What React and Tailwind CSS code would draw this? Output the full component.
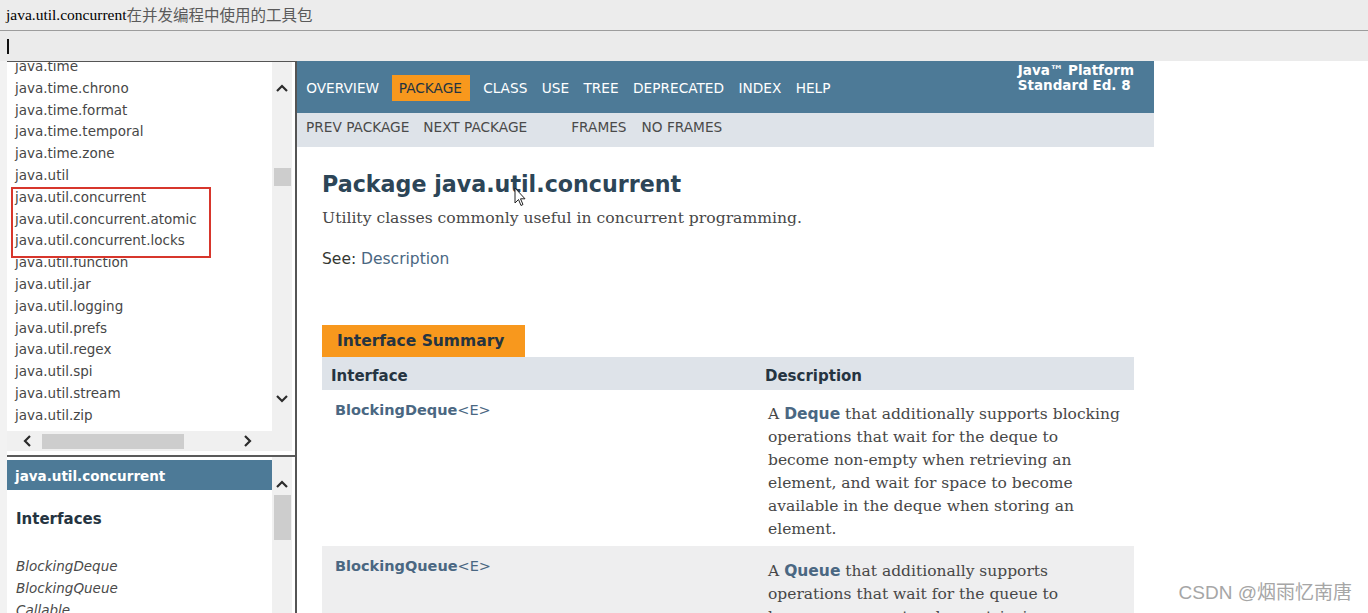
import React from "react";

const packages = [
  "java.time",
  "java.time.chrono",
  "java.time.format",
  "java.time.temporal",
  "java.time.zone",
  "java.util",
  "java.util.concurrent",
  "java.util.concurrent.atomic",
  "java.util.concurrent.locks",
  "java.util.function",
  "java.util.jar",
  "java.util.logging",
  "java.util.prefs",
  "java.util.regex",
  "java.util.spi",
  "java.util.stream",
  "java.util.zip",
  "java.util.zip.util",
];

const navItems = ["OVERVIEW", "PACKAGE", "CLASS", "USE", "TREE", "DEPRECATED", "INDEX", "HELP"];

function Chevron({ dir = "up" }) {
  const pts = {
    up: "1,7 6,2 11,7",
    down: "1,2 6,7 11,2",
    left: "7,1 2,6 7,11",
    right: "2,1 7,6 2,11",
  }[dir];
  const horiz = dir === "left" || dir === "right";
  return (
    <svg width={horiz ? 9 : 12} height={horiz ? 12 : 9} viewBox={horiz ? "0 0 9 12" : "0 0 12 9"}>
      <polyline points={pts} fill="none" stroke="#2b2b2b" strokeWidth="2.2" />
    </svg>
  );
}

export default function App() {
  return (
    <div className="w-[1368px] h-[613px] overflow-hidden bg-white relative flex flex-col font-['DejaVu_Sans',sans-serif]">
      {/* title bar of the editor */}
      <div className="h-[31px] bg-[#ececec] border-b border-[#9c9c9c] flex items-center pl-[6px] shrink-0">
        <span className="font-['Liberation_Serif',serif] text-[15.5px] text-black">java.util.concurrent</span>
        <span className="font-['Noto_Sans_CJK_SC',sans-serif] text-[15.5px] text-[#5a5a5a]">在并发编程中使用的工具包</span>
      </div>
      <div className="h-[30px] bg-[#ebebeb] flex items-center pl-[7px] shrink-0">
        <div className="w-[2px] h-[15px] bg-[#111]" />
      </div>

      <div className="flex flex-1 min-h-0">
        <div className="w-[7px] bg-[#f2f2f2]" />

        {/* left frames */}
        <div className="w-[288px] flex flex-col border-t border-[#555]">
          <div className="h-[369px] flex">
            <div className="w-[265px] bg-white relative overflow-hidden">
              <div className="mt-[-6px] pl-[8px] text-[13.5px] text-[#474747]">
                {packages.map((p) => (
                  <div key={p} className="h-[21.8px] leading-[21.8px] whitespace-nowrap">
                    {p}
                  </div>
                ))}
              </div>
              <div className="absolute left-[4px] top-[125px] w-[200px] h-[71px] border-2 border-[#d7362c]" />
            </div>
            <div className="w-[20px] bg-[#f0f0f0] flex flex-col items-center">
              <div className="mt-[22px]">
                <Chevron dir="up" />
              </div>
              <div className="mt-[75px] w-[17px] h-[18px] bg-[#cdcdcd]" />
              <div className="mt-[208px]">
                <Chevron dir="down" />
              </div>
            </div>
            <div className="flex-1 bg-white" />
          </div>
          <div className="h-[20px] flex">
            <div className="w-[265px] bg-[#f0f0f0] flex items-center">
              <div className="ml-[16px]">
                <Chevron dir="left" />
              </div>
              <div className="ml-[10px] w-[142px] h-[15px] bg-[#cdcdcd]" />
              <div className="ml-[59px]">
                <Chevron dir="right" />
              </div>
            </div>
            <div className="w-[20px] bg-[#f0f0f0]" />
          </div>
          <div className="h-[4px] bg-white" />
          <div className="h-[2px] bg-[#5a5a5a]" />
          <div className="flex-1 flex min-h-0">
            <div className="w-[265px] bg-white pt-[3px]">
              <div className="h-[30px] bg-[#4d7a97] text-white font-bold text-[13.5px] flex items-center pl-[8px] pt-[2px]">
                java.util.concurrent
              </div>
              <div className="mt-[19px] pl-[9px] text-[15px] leading-[20px] font-bold text-[#253441]">Interfaces</div>
              <div className="mt-[27px] pl-[9px] text-[13.5px] italic text-[#4a4a4a]">
                <div className="h-[21.8px] leading-[21.8px]">BlockingDeque</div>
                <div className="h-[21.8px] leading-[21.8px]">BlockingQueue</div>
                <div className="h-[21.8px] leading-[21.8px]">Callable</div>
              </div>
            </div>
            <div className="w-[20px] bg-[#f0f0f0] flex flex-col items-center">
              <div className="mt-[23px]">
                <Chevron dir="up" />
              </div>
              <div className="mt-[6px] w-[17px] h-[45px] bg-[#cdcdcd]" />
            </div>
            <div className="flex-1 bg-white" />
          </div>
        </div>

        <div className="w-[2px] bg-[#555]" />

        {/* right frame */}
        <div className="flex-1 bg-white relative">
          <div className="w-[857px]">
            <div className="h-[52px] bg-[#4d7a97] flex justify-between">
              <div className="flex pt-[14px] pl-[2px] text-[13.7px] text-white">
                {navItems.map((n) =>
                  n === "PACKAGE" ? (
                    <div key={n} className="h-[26px] ml-[5.5px] mr-[6px] pl-[7px] pr-[8px] bg-[#f8981d] text-[#253441] flex items-center">
                      {n}
                    </div>
                  ) : (
                    <div key={n} className="h-[26px] px-[7.2px] flex items-center">
                      {n}
                    </div>
                  )
                )}
              </div>
              <div className="pt-[2px] pr-[20px] text-[13.5px] leading-[15px] font-bold text-white">
                <div>Java™ Platform</div>
                <div>Standard Ed. 8</div>
              </div>
            </div>
            <div className="h-[34px] bg-[#dee3e9] flex pt-[6px] pl-[9px] text-[13.7px] leading-[16px] text-[#4a4a4a]">
              <span>PREV PACKAGE</span>
              <span className="ml-[14px]">NEXT PACKAGE</span>
              <span className="ml-[44px]">FRAMES</span>
              <span className="ml-[15px]">NO FRAMES</span>
            </div>
          </div>

          <div className="pl-[25px]">
            <h1 className="mt-[22px] text-[22.2px] leading-[30px] font-bold text-[#2c4557]">Package java.util.concurrent</h1>
            <p className="mt-[8px] font-['DejaVu_Serif',serif] text-[15.6px] leading-[22px] text-[#474747]">
              Utility classes commonly useful in concurrent programming.
            </p>
            <p className="mt-[19px] text-[15.5px] leading-[22px] text-[#353833]">
              See: <span className="text-[#4a6782]">Description</span>
            </p>

            <div className="mt-[55px] w-[812px]">
              <div className="w-[203px] h-[32px] bg-[#f8981d] flex items-center pl-[15px] pt-[2px] text-[15.5px] font-bold text-[#253441]">
                Interface Summary
              </div>
              <div className="flex h-[33px] bg-[#dee3e9] text-[15px] leading-[20px] font-bold text-[#253441]">
                <div className="w-[434px] pl-[9px] pt-[9px]">Interface</div>
                <div className="flex-1 pl-[9px] pt-[9px]">Description</div>
              </div>
              <div className="flex bg-white h-[156px]">
                <div className="w-[434px] pl-[13px] pt-[10px] text-[14.5px] leading-[20px] text-[#4a6782]">
                  <span className="font-bold">BlockingDeque</span>&lt;E&gt;
                </div>
                <div className="flex-1 pl-[12px] pt-[13px] font-['DejaVu_Serif',serif] text-[15.5px] leading-[23px] text-[#474747] whitespace-nowrap">
                  <div>
                    A <span className="font-['DejaVu_Sans',sans-serif] font-bold text-[#4a6782]">Deque</span> that additionally supports blocking
                  </div>
                  <div>operations that wait for the deque to</div>
                  <div>become non-empty when retrieving an</div>
                  <div>element, and wait for space to become</div>
                  <div>available in the deque when storing an</div>
                  <div>element.</div>
                </div>
              </div>
              <div className="flex bg-[#eeeeef] h-[120px]">
                <div className="w-[434px] pl-[13px] pt-[10px] text-[14.5px] leading-[20px] text-[#4a6782]">
                  <span className="font-bold">BlockingQueue</span>&lt;E&gt;
                </div>
                <div className="flex-1 pl-[12px] pt-[14px] font-['DejaVu_Serif',serif] text-[15.5px] leading-[23px] text-[#474747] whitespace-nowrap">
                  <div>
                    A <span className="font-['DejaVu_Sans',sans-serif] font-bold text-[#4a6782]">Queue</span> that additionally supports
                  </div>
                  <div>operations that wait for the queue to</div>
                  <div>become non-empty when retrieving an</div>
                </div>
              </div>
            </div>
          </div>

          {/* mouse pointer */}
          <svg className="absolute left-[217px] top-[126px]" width="12" height="20" viewBox="0 0 12 20">
            <path d="M1 1 L1 16 L4.5 12.5 L7 18.5 L9 17.5 L6.5 11.8 L11 11.8 Z" fill="white" stroke="#222" strokeWidth="1" />
          </svg>
        </div>
      </div>

      <div className="absolute right-[16px] bottom-[6px] text-[19px] leading-[28px] text-[#a6a6a6] font-['Liberation_Sans','Noto_Sans_CJK_SC',sans-serif] [text-shadow:0_0_2px_#fff]">
        CSDN @烟雨忆南唐
      </div>
    </div>
  );
}
